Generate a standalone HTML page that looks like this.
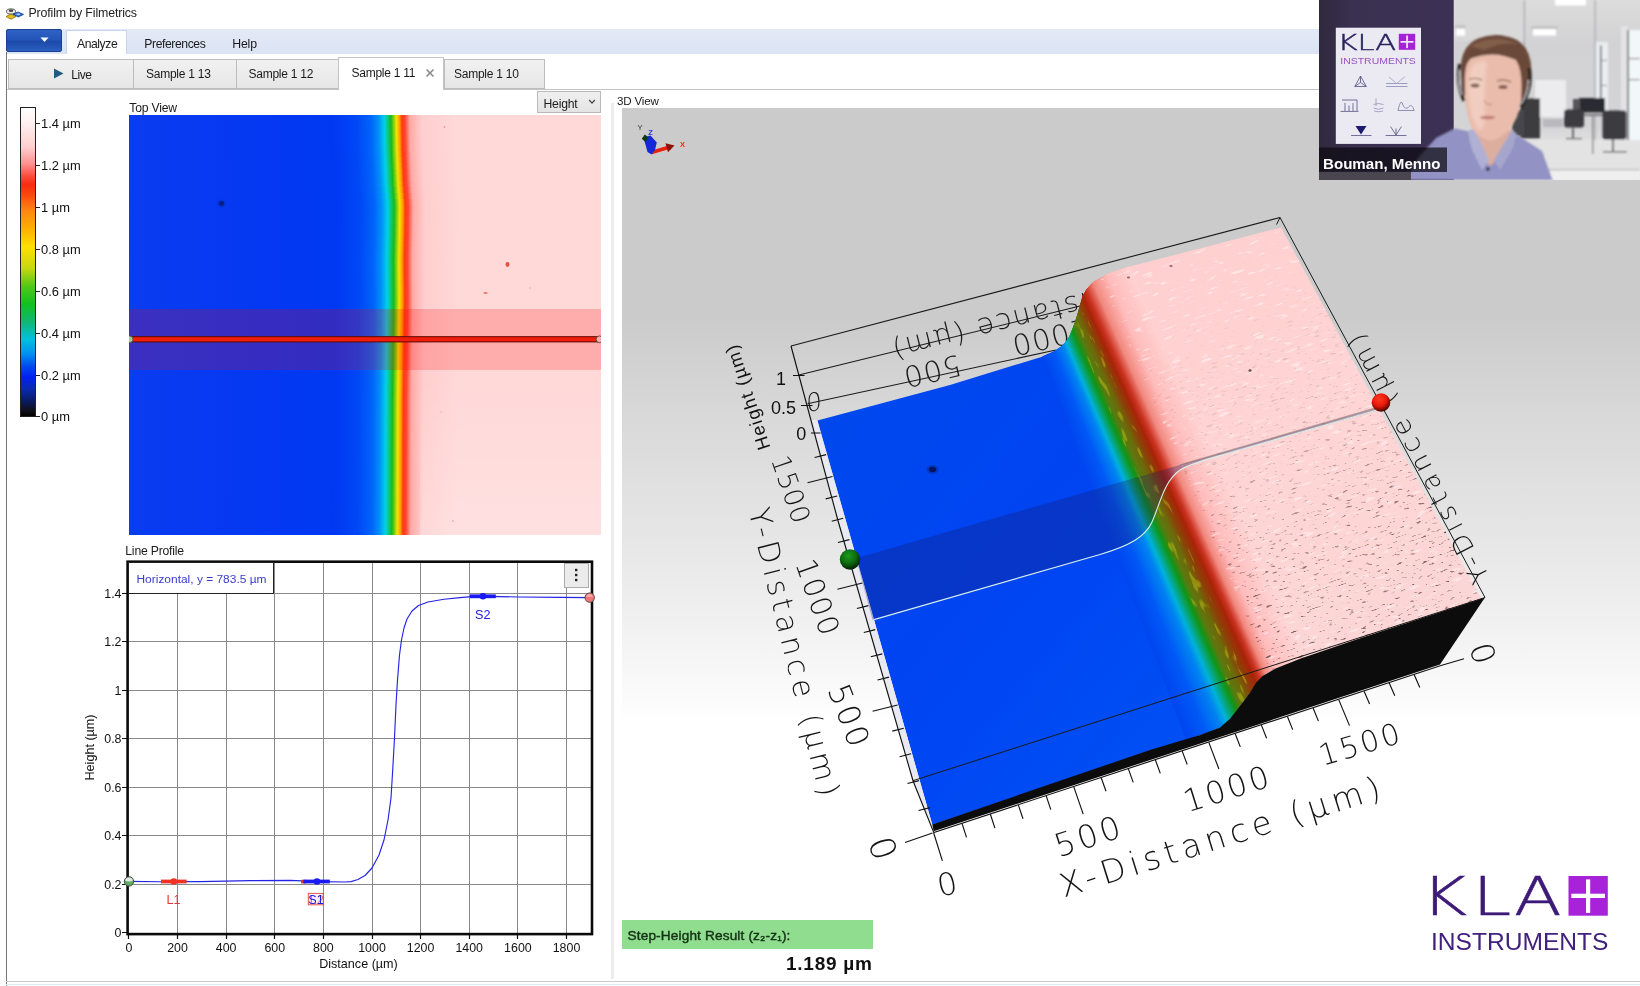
<!DOCTYPE html>
<html lang="en">
<head>
<meta charset="utf-8">
<title>Profilm by Filmetrics</title>
<style>
*{box-sizing:border-box;margin:0;padding:0}
html,body{width:1640px;height:986px;overflow:hidden;background:#fff}
body{opacity:.9999;position:relative;font-family:"Liberation Sans",sans-serif;font-size:12px;color:#1a1a1a}
.abs{position:absolute}
.t{position:absolute;white-space:nowrap;line-height:1}
#titlebar{left:0;top:0;width:1640px;height:29px;background:#fff}
#ribbon{left:6px;top:29px;width:1634px;height:25px;background:linear-gradient(#e3e9f6,#dbe4f4)}
#appbtn{left:6px;top:29px;width:56px;height:23px;background:linear-gradient(#2f62c4,#2456b8 45%,#1c4aa8 55%,#2a5ec0);border:1px solid #1c3f94;border-radius:2px}
#tabAnalyze{left:66px;top:30px;width:61px;height:24px;background:#fff;border:1px solid #c9d4ea;border-bottom:none}
.doc{position:absolute;top:59px;height:30px;background:linear-gradient(#f1f1f1,#e6e6e6);border:1px solid #bdbdbd;border-right:none}
#tabrowline{left:7px;top:89px;width:1312px;height:1px;background:#c4c4c4}
#leftline{left:6px;top:52px;width:1px;height:934px;background:#777}
#bottomline{left:6px;top:981px;width:1634px;height:1px;background:#c9c9c9}
#bottomstrip{left:6px;top:984px;width:1634px;height:1px;background:#d6f0f6}
#splitter{left:611px;top:103px;width:3px;height:876px;background:#ececec}
#heightdd{left:537px;top:91px;width:64px;height:22px;background:linear-gradient(#f0f0f0,#e4e4e4);border:1px solid #b9b9b9}
</style>
</head>
<body>
<!-- ===== window chrome ===== -->
<div id="titlebar" class="abs"></div>
<svg class="abs" style="left:5px;top:6px" width="20" height="16" viewBox="0 0 20 16">
  <ellipse cx="6" cy="5.5" rx="4.5" ry="2.6" fill="#e8e8e8" stroke="#555" stroke-width="1"/>
  <ellipse cx="6" cy="4.8" rx="2.2" ry="1.2" fill="#444"/>
  <path d="M1 10.5 L6 8.2 L11 10.5 L6 13.2 Z" fill="#e6c020" stroke="#8a6a00" stroke-width=".8"/>
  <path d="M8 8.2 L13 6 L18.5 8.4 L13.2 11 Z" fill="#2c6fd8" stroke="#123a80" stroke-width=".8"/>
  <ellipse cx="13.3" cy="8.2" rx="2" ry="1" fill="#9cc4ff"/>
</svg>
<div class="t" id="ttl" style="left:28.5px;top:7px;font-size:12.4px;letter-spacing:-.15px;color:#222">Profilm by Filmetrics</div>

<div id="ribbon" class="abs"></div>
<div id="appbtn" class="abs"></div>
<svg class="abs" style="left:40px;top:37px" width="10" height="6"><path d="M0.5 0.5 L8.5 0.5 L4.5 5 Z" fill="#fff"/></svg>
<div id="tabAnalyze" class="abs"></div>
<div class="t" id="mAnalyze" style="left:77px;top:37.5px;font-size:12.2px;letter-spacing:-.45px">Analyze</div>
<div class="t" id="mPref" style="left:144.3px;top:37.5px;font-size:12.2px;letter-spacing:-.42px">Preferences</div>
<div class="t" id="mHelp" style="left:232.3px;top:37.5px;font-size:12.3px;letter-spacing:-.2px">Help</div>

<div id="tabrowline" class="abs"></div>
<div class="doc" style="left:8px;width:126px"></div>
<div class="doc" style="left:133px;width:104px"></div>
<div class="doc" style="left:236px;width:103px"></div>
<div class="doc" style="left:444px;width:101px;border-right:1px solid #bdbdbd"></div>
<div class="abs" style="left:338px;top:57px;width:106px;height:33px;background:#fff;border:1px solid #c4c4c4;border-bottom:none"></div>
<svg class="abs" style="left:53px;top:68px" width="12" height="12"><path d="M1 0.5 L10.5 5.5 L1 10.5 Z" fill="#1f5c80"/></svg>
<div class="t" id="dLive" style="left:71.3px;top:68.5px;font-size:12px;letter-spacing:-.5px">Live</div>
<div class="t" id="d13" style="left:146px;top:68px;font-size:12px;letter-spacing:-.25px">Sample 1 13</div>
<div class="t" id="d12" style="left:248.5px;top:68px;font-size:12px;letter-spacing:-.25px">Sample 1 12</div>
<div class="t" id="d11" style="left:351.5px;top:67px;font-size:12px;letter-spacing:-.25px">Sample 1 11</div>
<svg class="abs" style="left:425px;top:68px" width="10" height="10"><path d="M1.5 1.5 L8.5 8.5 M8.5 1.5 L1.5 8.5" stroke="#8c8c8c" stroke-width="1.7" fill="none"/></svg>
<div class="t" id="d10" style="left:454px;top:68px;font-size:12px;letter-spacing:-.25px">Sample 1 10</div>

<div id="leftline" class="abs"></div>
<div id="splitter" class="abs"></div>
<div id="bottomline" class="abs"></div>
<div id="bottomstrip" class="abs"></div>

<!-- ===== colour bar ===== -->
<svg class="abs" style="left:0;top:100px" width="128" height="330" viewBox="0 100 128 330" font-family="Liberation Sans, sans-serif" font-size="12.9" fill="#111">
  <defs>
    <linearGradient id="cbar" x1="0" y1="0" x2="0" y2="1">
      <stop offset="0" stop-color="#ffffff"/>
      <stop offset=".043" stop-color="#fff2f2"/>
      <stop offset=".127" stop-color="#ffd0d0"/>
      <stop offset=".183" stop-color="#ff9090"/>
      <stop offset=".22" stop-color="#fb5040"/>
      <stop offset=".25" stop-color="#f82a0e"/>
      <stop offset=".285" stop-color="#fb4a10"/>
      <stop offset=".31" stop-color="#ff6a10"/>
      <stop offset=".34" stop-color="#ff8c10"/>
      <stop offset=".395" stop-color="#ffb000"/>
      <stop offset=".45" stop-color="#ffe000"/>
      <stop offset=".519" stop-color="#c8d810"/>
      <stop offset=".579" stop-color="#50c818"/>
      <stop offset=".638" stop-color="#10c020"/>
      <stop offset=".697" stop-color="#10b878"/>
      <stop offset=".75" stop-color="#00c0e0"/>
      <stop offset=".798" stop-color="#0090f0"/>
      <stop offset=".839" stop-color="#0048f0"/>
      <stop offset=".874" stop-color="#0020f0"/>
      <stop offset=".91" stop-color="#0a2ab0"/>
      <stop offset=".951" stop-color="#0a1a60"/>
      <stop offset=".981" stop-color="#101018"/>
      <stop offset="1" stop-color="#000000"/>
    </linearGradient>
  </defs>
  <rect x="20.5" y="107.5" width="15" height="309" fill="url(#cbar)" stroke="#222" stroke-width="1"/>
  <g stroke="#222" stroke-width="1">
    <path d="M35 123.5h5M35 165.5h5M35 207.5h5M35 249.5h5M35 291.5h5M35 333.5h5M35 375.5h5M35 416.5h5"/>
  </g>
  <text x="41" y="128">1.4 µm</text>
  <text x="41" y="170">1.2 µm</text>
  <text x="41" y="212">1 µm</text>
  <text x="41" y="254">0.8 µm</text>
  <text x="41" y="296">0.6 µm</text>
  <text x="41" y="338">0.4 µm</text>
  <text x="41" y="380">0.2 µm</text>
  <text x="41" y="421">0 µm</text>
</svg>

<!-- ===== top view ===== -->
<div class="t" id="lblTop" style="left:129.3px;top:101.5px;font-size:12.2px;letter-spacing:-.2px">Top View</div>
<div id="heightdd" class="abs"></div>
<div class="t" id="lblHeight" style="left:543.5px;top:97.5px;font-size:12.2px;letter-spacing:-.2px">Height</div>
<svg class="abs" style="left:588px;top:99px" width="8" height="6"><path d="M1.2 1 L4 4.2 L6.8 1" stroke="#444" stroke-width="1.2" fill="none"/></svg>
<svg class="abs" style="left:129px;top:115px" width="472" height="420" viewBox="129 115 472 420">
  <defs>
    <linearGradient id="tv" gradientUnits="userSpaceOnUse" x1="128" y1="0" x2="601" y2="0">
      <stop offset="0" stop-color="#0a3cf0"/>
      <stop offset=".30" stop-color="#0438f2"/>
      <stop offset=".44" stop-color="#0038f2"/>
      <stop offset=".49" stop-color="#0048f6"/>
      <stop offset=".52" stop-color="#0064fa"/>
      <stop offset=".536" stop-color="#0090f8"/>
      <stop offset=".5484" stop-color="#00d0e8"/>
      <stop offset=".556" stop-color="#10c878"/>
      <stop offset=".5624" stop-color="#14bc1c"/>
      <stop offset=".5687" stop-color="#8cd010"/>
      <stop offset=".5738" stop-color="#f4e400"/>
      <stop offset=".5806" stop-color="#ff9c00"/>
      <stop offset=".5856" stop-color="#ff3c10"/>
      <stop offset=".592" stop-color="#ff4432"/>
      <stop offset=".6025" stop-color="#ffaaa6"/>
      <stop offset=".628" stop-color="#ffcece"/>
      <stop offset=".70" stop-color="#ffd8d8"/>
      <stop offset="1" stop-color="#ffd8d8"/>
    </linearGradient>
    <linearGradient id="tvl" x1="0" y1="0" x2="0" y2="1"><stop offset="0" stop-color="#fff" stop-opacity="0"/><stop offset="1" stop-color="#fff" stop-opacity=".22"/></linearGradient>
    <clipPath id="tvc"><rect x="129" y="115" width="472" height="420"/></clipPath>
  </defs>
  <g clip-path="url(#tvc)">
    <rect x="120" y="115" width="490" height="7" fill="url(#tv)" transform="translate(-3.15 0)"/>
    <rect x="120" y="121" width="490" height="7" fill="url(#tv)" transform="translate(-3.05 0)"/>
    <rect x="120" y="127" width="490" height="7" fill="url(#tv)" transform="translate(-2.94 0)"/>
    <rect x="120" y="133" width="490" height="7" fill="url(#tv)" transform="translate(-2.84 0)"/>
    <rect x="120" y="139" width="490" height="7" fill="url(#tv)" transform="translate(-2.74 0)"/>
    <rect x="120" y="145" width="490" height="7" fill="url(#tv)" transform="translate(-2.63 0)"/>
    <rect x="120" y="151" width="490" height="7" fill="url(#tv)" transform="translate(-2.44 0)"/>
    <rect x="120" y="157" width="490" height="7" fill="url(#tv)" transform="translate(-2.20 0)"/>
    <rect x="120" y="163" width="490" height="7" fill="url(#tv)" transform="translate(-1.96 0)"/>
    <rect x="120" y="169" width="490" height="7" fill="url(#tv)" transform="translate(-1.72 0)"/>
    <rect x="120" y="175" width="490" height="7" fill="url(#tv)" transform="translate(-1.48 0)"/>
    <rect x="120" y="181" width="490" height="7" fill="url(#tv)" transform="translate(-1.24 0)"/>
    <rect x="120" y="187" width="490" height="7" fill="url(#tv)" transform="translate(-0.82 0)"/>
    <rect x="120" y="193" width="490" height="7" fill="url(#tv)" transform="translate(-0.38 0)"/>
    <rect x="120" y="199" width="490" height="7" fill="url(#tv)" transform="translate(0.07 0)"/>
    <rect x="120" y="205" width="490" height="7" fill="url(#tv)" transform="translate(0.26 0)"/>
    <rect x="120" y="211" width="490" height="7" fill="url(#tv)" transform="translate(0.19 0)"/>
    <rect x="120" y="217" width="490" height="7" fill="url(#tv)" transform="translate(0.12 0)"/>
    <rect x="120" y="223" width="490" height="7" fill="url(#tv)" transform="translate(0.05 0)"/>
    <rect x="120" y="229" width="490" height="7" fill="url(#tv)" transform="translate(-0.04 0)"/>
    <rect x="120" y="235" width="490" height="7" fill="url(#tv)" transform="translate(-0.16 0)"/>
    <rect x="120" y="241" width="490" height="7" fill="url(#tv)" transform="translate(-0.28 0)"/>
    <rect x="120" y="247" width="490" height="7" fill="url(#tv)" transform="translate(-0.40 0)"/>
    <rect x="120" y="253" width="490" height="7" fill="url(#tv)" transform="translate(-0.52 0)"/>
    <rect x="120" y="259" width="490" height="7" fill="url(#tv)" transform="translate(-0.58 0)"/>
    <rect x="120" y="265" width="490" height="7" fill="url(#tv)" transform="translate(-0.52 0)"/>
    <rect x="120" y="271" width="490" height="7" fill="url(#tv)" transform="translate(-0.46 0)"/>
    <rect x="120" y="277" width="490" height="7" fill="url(#tv)" transform="translate(-0.40 0)"/>
    <rect x="120" y="283" width="490" height="7" fill="url(#tv)" transform="translate(-0.34 0)"/>
    <rect x="120" y="289" width="490" height="7" fill="url(#tv)" transform="translate(-0.28 0)"/>
    <rect x="120" y="295" width="490" height="7" fill="url(#tv)" transform="translate(-0.22 0)"/>
    <rect x="120" y="301" width="490" height="7" fill="url(#tv)" transform="translate(-0.26 0)"/>
    <rect x="120" y="307" width="490" height="7" fill="url(#tv)" transform="translate(-0.35 0)"/>
    <rect x="120" y="313" width="490" height="7" fill="url(#tv)" transform="translate(-0.44 0)"/>
    <rect x="120" y="319" width="490" height="7" fill="url(#tv)" transform="translate(-0.53 0)"/>
    <rect x="120" y="325" width="490" height="7" fill="url(#tv)" transform="translate(-0.62 0)"/>
    <rect x="120" y="331" width="490" height="7" fill="url(#tv)" transform="translate(-0.71 0)"/>
    <rect x="120" y="337" width="490" height="7" fill="url(#tv)" transform="translate(-0.80 0)"/>
    <rect x="120" y="343" width="490" height="7" fill="url(#tv)" transform="translate(-0.88 0)"/>
    <rect x="120" y="349" width="490" height="7" fill="url(#tv)" transform="translate(-0.96 0)"/>
    <rect x="120" y="355" width="490" height="7" fill="url(#tv)" transform="translate(-1.04 0)"/>
    <rect x="120" y="361" width="490" height="7" fill="url(#tv)" transform="translate(-1.12 0)"/>
    <rect x="120" y="367" width="490" height="7" fill="url(#tv)" transform="translate(-1.20 0)"/>
    <rect x="120" y="373" width="490" height="7" fill="url(#tv)" transform="translate(-1.28 0)"/>
    <rect x="120" y="379" width="490" height="7" fill="url(#tv)" transform="translate(-1.36 0)"/>
    <rect x="120" y="385" width="490" height="7" fill="url(#tv)" transform="translate(-1.44 0)"/>
    <rect x="120" y="391" width="490" height="7" fill="url(#tv)" transform="translate(-1.52 0)"/>
    <rect x="120" y="397" width="490" height="7" fill="url(#tv)" transform="translate(-1.60 0)"/>
    <rect x="120" y="403" width="490" height="7" fill="url(#tv)" transform="translate(-1.63 0)"/>
    <rect x="120" y="409" width="490" height="7" fill="url(#tv)" transform="translate(-1.65 0)"/>
    <rect x="120" y="415" width="490" height="7" fill="url(#tv)" transform="translate(-1.68 0)"/>
    <rect x="120" y="421" width="490" height="7" fill="url(#tv)" transform="translate(-1.70 0)"/>
    <rect x="120" y="427" width="490" height="7" fill="url(#tv)" transform="translate(-1.73 0)"/>
    <rect x="120" y="433" width="490" height="7" fill="url(#tv)" transform="translate(-1.75 0)"/>
    <rect x="120" y="439" width="490" height="7" fill="url(#tv)" transform="translate(-1.78 0)"/>
    <rect x="120" y="445" width="490" height="7" fill="url(#tv)" transform="translate(-1.81 0)"/>
    <rect x="120" y="451" width="490" height="7" fill="url(#tv)" transform="translate(-1.83 0)"/>
    <rect x="120" y="457" width="490" height="7" fill="url(#tv)" transform="translate(-1.86 0)"/>
    <rect x="120" y="463" width="490" height="7" fill="url(#tv)" transform="translate(-1.88 0)"/>
    <rect x="120" y="469" width="490" height="7" fill="url(#tv)" transform="translate(-1.91 0)"/>
    <rect x="120" y="475" width="490" height="7" fill="url(#tv)" transform="translate(-1.94 0)"/>
    <rect x="120" y="481" width="490" height="7" fill="url(#tv)" transform="translate(-1.96 0)"/>
    <rect x="120" y="487" width="490" height="7" fill="url(#tv)" transform="translate(-1.99 0)"/>
    <rect x="120" y="493" width="490" height="7" fill="url(#tv)" transform="translate(-2.02 0)"/>
    <rect x="120" y="499" width="490" height="7" fill="url(#tv)" transform="translate(-2.05 0)"/>
    <rect x="120" y="505" width="490" height="7" fill="url(#tv)" transform="translate(-2.08 0)"/>
    <rect x="120" y="511" width="490" height="7" fill="url(#tv)" transform="translate(-2.10 0)"/>
    <rect x="120" y="517" width="490" height="7" fill="url(#tv)" transform="translate(-2.13 0)"/>
    <rect x="120" y="523" width="490" height="7" fill="url(#tv)" transform="translate(-2.16 0)"/>
    <rect x="120" y="529" width="490" height="7" fill="url(#tv)" transform="translate(-2.19 0)"/>
    <!-- specks -->
    <ellipse cx="221.5" cy="203.5" rx="2.6" ry="2.4" fill="#0a1a70"/>
    <ellipse cx="221.5" cy="203.5" rx="4.5" ry="4" fill="#0a2ab0" opacity=".35"/>
    <ellipse cx="507.5" cy="264.5" rx="1.9" ry="2.4" fill="#e8503c"/>
    <ellipse cx="485.5" cy="293" rx="2.2" ry="1" fill="#ee7868"/>
    <circle cx="444.5" cy="127" r=".9" fill="#ee9a90"/>
    <circle cx="530" cy="288" r=".7" fill="#ee9a90"/>
    <circle cx="441" cy="412" r=".7" fill="#f0a8a0"/>
    <circle cx="453" cy="521" r="1" fill="#e8a098"/>
    <rect x="420" y="380" width="181" height="155" fill="url(#tvl)"/>
    <!-- profile band -->
    <rect x="128" y="309" width="473" height="61" fill="#ff0000" opacity=".2"/>
    <!-- profile line -->
    <rect x="130" y="336.6" width="469" height="5.4" fill="#f01c0c"/>
    <rect x="130" y="336.2" width="469" height="1" fill="#5a0a04"/>
    <rect x="130" y="341.4" width="469" height="1" fill="#5a0a04"/>
    <circle cx="129.5" cy="339.3" r="3.4" fill="#9ad09a" stroke="#555" stroke-width=".9"/>
    <circle cx="599.5" cy="339.3" r="3.4" fill="#f4b0a8" stroke="#6a3a34" stroke-width=".9"/>
  </g>
</svg>

<!-- ===== line profile ===== -->
<div class="t" id="lblLine" style="left:125.3px;top:545px;font-size:12.2px;letter-spacing:-.2px">Line Profile</div>
<svg class="abs" style="left:70px;top:555px" width="540" height="425" viewBox="70 555 540 425" font-family="Liberation Sans, sans-serif" font-size="12.4" fill="#111">
  <rect x="128" y="562" width="464" height="372" fill="#fff"/>
  <path d="M177.5 562V933M226.5 562V933M274.5 562V933M323.5 562V933M372.5 562V933M420.5 562V933M469.5 562V933M517.5 562V933M566.5 562V933M129 884.5H591M129 835.5H591M129 787.5H591M129 738.5H591M129 690.5H591M129 641.5H591M129 593.5H591" stroke="#8a8a8a" stroke-width="1" fill="none"/>
  <path d="M122 932.5H128M122 884.5H128M122 835.5H128M122 787.5H128M122 738.5H128M122 690.5H128M122 641.5H128M122 593.5H128M128.5 934V939M177.5 934V939M226.5 934V939M274.5 934V939M323.5 934V939M372.5 934V939M420.5 934V939M469.5 934V939M517.5 934V939M566.5 934V939" stroke="#111" stroke-width="1.2" fill="none"/>
  <rect x="127.6" y="561.7" width="464.4" height="372.4" fill="none" stroke="#0a0a0a" stroke-width="2.6"/>
  <text x="121.5" y="937.4" text-anchor="end">0</text><text x="121.5" y="888.9" text-anchor="end">0.2</text><text x="121.5" y="840.4" text-anchor="end">0.4</text><text x="121.5" y="791.9" text-anchor="end">0.6</text><text x="121.5" y="743.4" text-anchor="end">0.8</text><text x="121.5" y="694.9" text-anchor="end">1</text><text x="121.5" y="646.4" text-anchor="end">1.2</text><text x="121.5" y="597.9" text-anchor="end">1.4</text>
  <text x="128.9" y="951.9" text-anchor="middle">0</text><text x="177.5" y="951.9" text-anchor="middle">200</text><text x="226.1" y="951.9" text-anchor="middle">400</text><text x="274.8" y="951.9" text-anchor="middle">600</text><text x="323.4" y="951.9" text-anchor="middle">800</text><text x="372.0" y="951.9" text-anchor="middle">1000</text><text x="420.6" y="951.9" text-anchor="middle">1200</text><text x="469.2" y="951.9" text-anchor="middle">1400</text><text x="517.9" y="951.9" text-anchor="middle">1600</text><text x="566.5" y="951.9" text-anchor="middle">1800</text>
  <text x="358.5" y="968" text-anchor="middle" font-size="12.6">Distance (µm)</text>
  <text transform="translate(93.5 747.5) rotate(-90)" text-anchor="middle" font-size="12.6">Height (µm)</text>
  <!-- legend -->
  <rect x="128.5" y="562.5" width="145" height="31" fill="#fff" stroke="#222" stroke-width="1"/>
  <text x="136.5" y="583.3" font-size="11.7" fill="#3a3ad0" textLength="130" lengthAdjust="spacingAndGlyphs">Horizontal, y = 783.5 µm</text>
  <!-- menu button -->
  <rect x="564.5" y="563.5" width="24" height="24" fill="#ebebeb" stroke="#ababab" stroke-width="1"/>
  <g fill="#222"><rect x="575" y="568.8" width="2.4" height="2.4"/><rect x="575" y="573.8" width="2.4" height="2.4"/><rect x="575" y="578.8" width="2.4" height="2.4"/></g>
  <!-- curve -->
  <path d="M129.0 881.4 L160.0 881.8 L200.0 881.6 L250.0 880.6 L290.0 880.4 L320.0 881.6 L345.0 882.0 L351.0 881.6 L358.0 879.5 L365.0 875.5 L372.0 868.0 L379.0 855.0 L384.0 840.0 L388.0 820.0 L391.0 798.0 L393.0 765.0 L394.5 738.0 L396.0 705.0 L397.5 680.0 L399.5 655.0 L401.5 640.0 L404.0 628.0 L407.0 619.0 L412.0 611.0 L418.5 605.5 L428.0 602.0 L444.0 599.3 L460.0 597.6 L472.0 596.6 L490.0 596.4 L520.0 597.0 L560.0 597.4 L590.0 597.6" stroke="#2424e6" stroke-width="1.15" fill="none" stroke-linejoin="round"/>
  <!-- markers -->
  <rect x="161" y="879.6" width="25.6" height="3.8" fill="#f03222"/>
  <circle cx="173.8" cy="881.5" r="3.3" fill="#f03222"/>
  <text x="166.5" y="904" fill="#e23a32" font-size="12.6">L1</text>
  <rect x="301" y="879.8" width="5" height="3.6" fill="#f03222"/>
  <rect x="303.3" y="879.6" width="26.5" height="3.8" fill="#1a1af2"/>
  <circle cx="317" cy="881.5" r="3.3" fill="#1a1af2"/>
  <rect x="308.3" y="893.4" width="15" height="11.4" fill="#fff0f0" stroke="#e23a32" stroke-width="1" opacity=".85"/>
  <text x="309.8" y="904" fill="#e23a32" font-size="12.6" opacity=".7">L2</text>
  <text x="308.3" y="904" fill="#2020e0" font-size="12.6">S1</text>
  <rect x="470" y="594.4" width="25.8" height="3.8" fill="#1a1af2"/>
  <circle cx="483" cy="596.3" r="3.3" fill="#1a1af2"/>
  <text x="475" y="618.7" fill="#2020e0" font-size="12.6">S2</text>
  <!-- handles -->
  <circle cx="129" cy="881.4" r="4.7" fill="#5fae5f" stroke="#4a4a4a" stroke-width="1"/>
  <path d="M125 880.4 A4.2 4.2 0 0 1 133 880.4 Q129 882.5 125 880.4Z" fill="#e6e6e6"/>
  <circle cx="589.7" cy="597.6" r="4.7" fill="#f27474" stroke="#5a4a4a" stroke-width="1"/>
  <path d="M586 596.4 A4 4 0 0 1 593.4 596.4 Q589.7 597.6 586 596.4Z" fill="#f8a6a6"/>
</svg>

<!-- ===== 3D view ===== -->
<div class="t" id="lbl3d" style="left:617px;top:95px;font-size:11.6px;letter-spacing:-.2px">3D View</div>
<!--V3S--><svg class="abs" style="left:622px;top:108px" width="1018" height="812" viewBox="622 108 1018 812">
  <defs>
    <linearGradient id="bg3d" gradientUnits="userSpaceOnUse" x1="0" y1="108" x2="0" y2="920">
      <stop offset="0" stop-color="#cbcbcb"/>
      <stop offset=".255" stop-color="#cbcbcb"/>
      <stop offset=".384" stop-color="#d9d9d9"/>
      <stop offset=".507" stop-color="#e4e4e4"/>
      <stop offset=".63" stop-color="#f0f0f0"/>
      <stop offset=".761" stop-color="#ffffff"/>
      <stop offset="1" stop-color="#ffffff"/>
    </linearGradient>
    <linearGradient id="blueg" gradientUnits="userSpaceOnUse" x1="820" y1="420" x2="1200" y2="740">
      <stop offset="0" stop-color="#0048ee"/>
      <stop offset=".5" stop-color="#0044f2"/>
      <stop offset="1" stop-color="#0050f4"/>
    </linearGradient>
    <linearGradient id="pinkg" gradientUnits="userSpaceOnUse" x1="1150" y1="260" x2="1420" y2="640">
      <stop offset="0" stop-color="#ffcfcf"/>
      <stop offset=".45" stop-color="#ffd4d4"/>
      <stop offset="1" stop-color="#fbd6d6"/>
    </linearGradient>
    <radialGradient id="sphG" cx=".42" cy=".32" r=".7">
      <stop offset="0" stop-color="#1e9a1e"/><stop offset=".55" stop-color="#0c6a10"/><stop offset="1" stop-color="#021a04"/>
    </radialGradient>
    <radialGradient id="sphR" cx=".42" cy=".32" r=".7">
      <stop offset="0" stop-color="#ff3a20"/><stop offset=".55" stop-color="#e41808"/><stop offset="1" stop-color="#3a0400"/>
    </radialGradient>
    <filter id="specks" x="0" y="0" width="100%" height="100%" color-interpolation-filters="sRGB">
      <feTurbulence type="fractalNoise" baseFrequency=".13 .5" numOctaves="2" seed="7" result="n"/>
      <feColorMatrix in="n" type="matrix" values="0 0 0 0 .45  0 0 0 0 .32  0 0 0 0 .32  -7 0 0 0 2.65"/>
    </filter>
    <filter id="hilite" x="0" y="0" width="100%" height="100%" color-interpolation-filters="sRGB">
      <feTurbulence type="fractalNoise" baseFrequency=".07 .35" numOctaves="2" seed="23" result="n"/>
      <feColorMatrix in="n" type="matrix" values="0 0 0 0 1  0 0 0 0 .96  0 0 0 0 .96  0 8 0 0 -5"/>
    </filter>
    <linearGradient id="fadeF" gradientUnits="userSpaceOnUse" x1="1200" y1="300" x2="1380" y2="660">
      <stop offset="0" stop-color="#fff" stop-opacity="0"/>
      <stop offset=".35" stop-color="#fff" stop-opacity=".25"/>
      <stop offset=".7" stop-color="#fff" stop-opacity=".8"/>
      <stop offset="1" stop-color="#fff" stop-opacity="1"/>
    </linearGradient>
    <mask id="mfade"><rect x="1080" y="220" width="420" height="460" fill="url(#fadeF)"/></mask>
    <filter id="yspk" x="0" y="0" width="100%" height="100%" color-interpolation-filters="sRGB">
      <feTurbulence type="fractalNoise" baseFrequency=".05 .22" numOctaves="2" seed="11" result="n"/>
      <feColorMatrix in="n" type="matrix" values="0 0 0 0 .74  0 0 0 0 .74  0 0 0 0 .08  0 9 0 0 -5.3"/>
    </filter>
    <clipPath id="oliveclip"><polygon points="1073.5,326 1080.5,303 1251,691 1238,708.500"/></clipPath>
    <clipPath id="pinkclip"><polygon points="1100,277 1281,227.5 1482,599.5 1270,671"/></clipPath>
  </defs>
  <rect x="622" y="108" width="1018" height="812" fill="url(#bg3d)"/>

  <!-- back lines + upside-down back labels -->
  <g stroke="#1a1a1a" stroke-width="1.1" fill="none">
    <path d="M791 346L1280 217.5M798.8 375L1082 305.5M807.5 403.8L1056 350"/>
  </g>
  <g font-family="DejaVu Sans Light, DejaVu Sans, Liberation Sans, sans-serif" font-weight="200" fill="#1a1a1a">
    <text transform="translate(814 401) rotate(166) skewX(-10)" font-size="25" text-anchor="middle" dominant-baseline="central">0</text>
    <text transform="translate(932 371) rotate(166.5)" font-size="29" text-anchor="middle" dominant-baseline="central" letter-spacing="1.2">500</text>
    <text transform="translate(1050 337) rotate(166.5)" font-size="29" text-anchor="middle" dominant-baseline="central" letter-spacing="1.2">1000</text>
    <text transform="translate(889 341.5) rotate(166)" font-size="28" text-anchor="end" letter-spacing="2.2">X-Distance (µm)</text>
  </g>

  <!-- surface -->
  <polygon points="817.5,420.5 950,385 1043,356.4 1187,739.4 932.3,824.8" fill="url(#blueg)"/>
  <polygon points="1128,267 1281,227.5 1482,599.5 1298,659.5" fill="url(#pinkg)"/>
    <polygon points="1042.0,356.6 1043.5,356.0 1045.0,355.3 1046.5,354.7 1193.1,737.3 1190.8,738.1 1188.4,738.9 1186.0,739.7" fill="#0047f0"/>
    <polygon points="1043.5,356.0 1045.0,355.3 1046.5,354.7 1048.0,354.1 1195.5,736.5 1193.1,737.3 1190.8,738.1 1188.4,738.9" fill="#0049f1"/>
    <polygon points="1045.0,355.3 1046.5,354.7 1048.0,354.1 1049.5,353.4 1197.9,735.6 1195.5,736.5 1193.1,737.3 1190.8,738.1" fill="#004cf2"/>
    <polygon points="1046.5,354.7 1048.0,354.1 1049.5,353.4 1051.0,352.8 1200.2,734.8 1197.9,735.6 1195.5,736.5 1193.1,737.3" fill="#004ef3"/>
    <polygon points="1048.0,354.1 1049.5,353.4 1051.0,352.8 1052.5,352.1 1202.6,734.0 1200.2,734.8 1197.9,735.6 1195.5,736.5" fill="#0050f3"/>
    <polygon points="1049.5,353.4 1051.0,352.8 1052.5,352.1 1054.0,351.5 1205.0,733.2 1202.6,734.0 1200.2,734.8 1197.9,735.6" fill="#0052f4"/>
    <polygon points="1051.0,352.8 1052.5,352.1 1054.0,351.5 1055.1,350.8 1207.0,732.4 1205.0,733.2 1202.6,734.0 1200.2,734.8" fill="#0055f5"/>
    <polygon points="1052.5,352.1 1054.0,351.5 1055.1,350.8 1056.1,350.0 1209.0,731.7 1207.0,732.4 1205.0,733.2 1202.6,734.0" fill="#0057f6"/>
    <polygon points="1054.0,351.5 1055.1,350.8 1056.1,350.0 1057.2,349.2 1211.0,730.9 1209.0,731.7 1207.0,732.4 1205.0,733.2" fill="#005bf6"/>
    <polygon points="1055.1,350.8 1056.1,350.0 1057.2,349.2 1058.2,348.5 1213.0,730.1 1211.0,730.9 1209.0,731.7 1207.0,732.4" fill="#0060f5"/>
    <polygon points="1056.1,350.0 1057.2,349.2 1058.2,348.5 1059.3,347.8 1215.0,729.3 1213.0,730.1 1211.0,730.9 1209.0,731.7" fill="#0066f5"/>
    <polygon points="1057.2,349.2 1058.2,348.5 1059.3,347.8 1060.4,347.0 1217.0,728.5 1215.0,729.3 1213.0,730.1 1211.0,730.9" fill="#006bf4"/>
    <polygon points="1058.2,348.5 1059.3,347.8 1060.4,347.0 1061.4,346.2 1219.0,727.8 1217.0,728.5 1215.0,729.3 1213.0,730.1" fill="#0071f4"/>
    <polygon points="1059.3,347.8 1060.4,347.0 1061.4,346.2 1062.5,345.5 1221.0,727.0 1219.0,727.8 1217.0,728.5 1215.0,729.3" fill="#0076f3"/>
    <polygon points="1060.4,347.0 1061.4,346.2 1062.5,345.5 1062.9,345.0 1221.8,726.4 1221.0,727.0 1219.0,727.8 1217.0,728.5" fill="#007cf3"/>
    <polygon points="1061.4,346.2 1062.5,345.5 1062.9,345.0 1063.4,344.5 1222.5,725.8 1221.8,726.4 1221.0,727.0 1219.0,727.8" fill="#0081f2"/>
    <polygon points="1062.5,345.5 1062.9,345.0 1063.4,344.5 1063.8,344.0 1223.2,725.1 1222.5,725.8 1221.8,726.4 1221.0,727.0" fill="#0087f1"/>
    <polygon points="1062.9,345.0 1063.4,344.5 1063.8,344.0 1064.2,343.5 1224.0,724.5 1223.2,725.1 1222.5,725.8 1221.8,726.4" fill="#008dee"/>
    <polygon points="1063.4,344.5 1063.8,344.0 1064.2,343.5 1064.7,343.0 1224.8,723.9 1224.0,724.5 1223.2,725.1 1222.5,725.8" fill="#0092eb"/>
    <polygon points="1063.8,344.0 1064.2,343.5 1064.7,343.0 1065.1,342.5 1225.5,723.2 1224.8,723.9 1224.0,724.5 1223.2,725.1" fill="#0098e8"/>
    <polygon points="1064.2,343.5 1064.7,343.0 1065.1,342.5 1065.6,342.0 1226.2,722.6 1225.5,723.2 1224.8,723.9 1224.0,724.5" fill="#009ee6"/>
    <polygon points="1064.7,343.0 1065.1,342.5 1065.6,342.0 1066.0,341.5 1227.0,722.0 1226.2,722.6 1225.5,723.2 1224.8,723.9" fill="#00a4e3"/>
    <polygon points="1065.1,342.5 1065.6,342.0 1066.0,341.5 1066.4,340.9 1227.6,721.4 1227.0,722.0 1226.2,722.6 1225.5,723.2" fill="#00a9e0"/>
    <polygon points="1065.6,342.0 1066.0,341.5 1066.4,340.9 1066.8,340.4 1228.1,720.8 1227.6,721.4 1227.0,722.0 1226.2,722.6" fill="#00afdd"/>
    <polygon points="1066.0,341.5 1066.4,340.9 1066.8,340.4 1067.1,339.8 1228.7,720.1 1228.1,720.8 1227.6,721.4 1227.0,722.0" fill="#00b1d6"/>
    <polygon points="1066.4,340.9 1066.8,340.4 1067.1,339.8 1067.5,339.2 1229.2,719.5 1228.7,720.1 1228.1,720.8 1227.6,721.4" fill="#02b0ca"/>
    <polygon points="1066.8,340.4 1067.1,339.8 1067.5,339.2 1067.9,338.7 1229.8,718.9 1229.2,719.5 1228.7,720.1 1228.1,720.8" fill="#02aebd"/>
    <polygon points="1067.1,339.8 1067.5,339.2 1067.9,338.7 1068.2,338.1 1230.4,718.2 1229.8,718.9 1229.2,719.5 1228.7,720.1" fill="#04adb1"/>
    <polygon points="1067.5,339.2 1067.9,338.7 1068.2,338.1 1068.6,337.6 1230.9,717.6 1230.4,718.2 1229.8,718.9 1229.2,719.5" fill="#04aba5"/>
    <polygon points="1067.9,338.7 1068.2,338.1 1068.6,337.6 1069.0,337.0 1231.5,717.0 1230.9,717.6 1230.4,718.2 1229.8,718.9" fill="#06aa99"/>
    <polygon points="1068.2,338.1 1068.6,337.6 1069.0,337.0 1069.4,336.1 1232.1,716.2 1231.5,717.0 1230.9,717.6 1230.4,718.2" fill="#06a88c"/>
    <polygon points="1068.6,337.6 1069.0,337.0 1069.4,336.1 1069.8,335.2 1232.6,715.5 1232.1,716.2 1231.5,717.0 1230.9,717.6" fill="#08a780"/>
    <polygon points="1069.0,337.0 1069.4,336.1 1069.8,335.2 1070.1,334.4 1233.2,714.8 1232.6,715.5 1232.1,716.2 1231.5,717.0" fill="#08a574"/>
    <polygon points="1069.4,336.1 1069.8,335.2 1070.1,334.4 1070.5,333.5 1233.8,714.0 1233.2,714.8 1232.6,715.5 1232.1,716.2" fill="#0aa368"/>
    <polygon points="1069.8,335.2 1070.1,334.4 1070.5,333.5 1070.9,332.6 1234.3,713.2 1233.8,714.0 1233.2,714.8 1232.6,715.5" fill="#0aa15b"/>
    <polygon points="1070.1,334.4 1070.5,333.5 1070.9,332.6 1071.2,331.8 1234.9,712.5 1234.3,713.2 1233.8,714.0 1233.2,714.8" fill="#0c9f4f"/>
    <polygon points="1070.5,333.5 1070.9,332.6 1071.2,331.8 1071.6,330.9 1235.4,711.8 1234.9,712.5 1234.3,713.2 1233.8,714.0" fill="#0c9d43"/>
    <polygon points="1070.9,332.6 1071.2,331.8 1071.6,330.9 1072.0,330.0 1236.0,711.0 1235.4,711.8 1234.9,712.5 1234.3,713.2" fill="#0e9b37"/>
    <polygon points="1071.2,331.8 1071.6,330.9 1072.0,330.0 1072.4,329.0 1236.5,710.4 1236.0,711.0 1235.4,711.8 1234.9,712.5" fill="#0e992a"/>
    <polygon points="1071.6,330.9 1072.0,330.0 1072.4,329.0 1072.8,328.0 1237.0,709.8 1236.5,710.4 1236.0,711.0 1235.4,711.8" fill="#10971e"/>
    <polygon points="1072.0,330.0 1072.4,329.0 1072.8,328.0 1073.1,327.0 1237.5,709.1 1237.0,709.8 1236.5,710.4 1236.0,711.0" fill="#159418"/>
    <polygon points="1072.4,329.0 1072.8,328.0 1073.1,327.0 1073.5,326.0 1238.0,708.5 1237.5,709.1 1237.0,709.8 1236.5,710.4" fill="#1e9116"/>
    <polygon points="1072.8,328.0 1073.1,327.0 1073.5,326.0 1073.9,325.0 1238.5,707.9 1238.0,708.5 1237.5,709.1 1237.0,709.8" fill="#288d16"/>
    <polygon points="1073.1,327.0 1073.5,326.0 1073.9,325.0 1074.2,324.0 1239.0,707.2 1238.5,707.9 1238.0,708.5 1237.5,709.1" fill="#318a14"/>
    <polygon points="1073.5,326.0 1073.9,325.0 1074.2,324.0 1074.6,323.0 1239.5,706.6 1239.0,707.2 1238.5,707.9 1238.0,708.5" fill="#3b8614"/>
    <polygon points="1073.9,325.0 1074.2,324.0 1074.6,323.0 1075.0,322.0 1240.0,706.0 1239.5,706.6 1239.0,707.2 1238.5,707.9" fill="#448312"/>
    <polygon points="1074.2,324.0 1074.6,323.0 1075.0,322.0 1075.3,321.0 1240.6,705.1 1240.0,706.0 1239.5,706.6 1239.0,707.2" fill="#4e7f12"/>
    <polygon points="1074.6,323.0 1075.0,322.0 1075.3,321.0 1075.6,320.0 1241.2,704.2 1240.6,705.1 1240.0,706.0 1239.5,706.6" fill="#577c10"/>
    <polygon points="1075.0,322.0 1075.3,321.0 1075.6,320.0 1075.9,319.0 1241.9,703.4 1241.2,704.2 1240.6,705.1 1240.0,706.0" fill="#5d7910"/>
    <polygon points="1075.3,321.0 1075.6,320.0 1075.9,319.0 1076.2,318.0 1242.5,702.5 1241.9,703.4 1241.2,704.2 1240.6,705.1" fill="#5f770f"/>
    <polygon points="1075.6,320.0 1075.9,319.0 1076.2,318.0 1076.6,317.0 1243.1,701.6 1242.5,702.5 1241.9,703.4 1241.2,704.2" fill="#62750f"/>
    <polygon points="1075.9,319.0 1076.2,318.0 1076.6,317.0 1076.9,316.0 1243.8,700.8 1243.1,701.6 1242.5,702.5 1241.9,703.4" fill="#64730e"/>
    <polygon points="1076.2,318.0 1076.6,317.0 1076.9,316.0 1077.2,315.0 1244.4,699.9 1243.8,700.8 1243.1,701.6 1242.5,702.5" fill="#66710e"/>
    <polygon points="1076.6,317.0 1076.9,316.0 1077.2,315.0 1077.5,314.0 1245.0,699.0 1244.4,699.9 1243.8,700.8 1243.1,701.6" fill="#686f0d"/>
    <polygon points="1076.9,316.0 1077.2,315.0 1077.5,314.0 1077.8,312.9 1245.6,698.2 1245.0,699.0 1244.4,699.9 1243.8,700.8" fill="#6b6d0d"/>
    <polygon points="1077.2,315.0 1077.5,314.0 1077.8,312.9 1078.1,311.8 1246.2,697.4 1245.6,698.2 1245.0,699.0 1244.4,699.9" fill="#6d6b0c"/>
    <polygon points="1077.5,314.0 1077.8,312.9 1078.1,311.8 1078.4,310.6 1246.9,696.6 1246.2,697.4 1245.6,698.2 1245.0,699.0" fill="#70680c"/>
    <polygon points="1077.8,312.9 1078.1,311.8 1078.4,310.6 1078.8,309.5 1247.5,695.8 1246.9,696.6 1246.2,697.4 1245.6,698.2" fill="#73630b"/>
    <polygon points="1078.1,311.8 1078.4,310.6 1078.8,309.5 1079.1,308.4 1248.1,694.9 1247.5,695.8 1246.9,696.6 1246.2,697.4" fill="#775e0b"/>
    <polygon points="1078.4,310.6 1078.8,309.5 1079.1,308.4 1079.4,307.2 1248.8,694.1 1248.1,694.9 1247.5,695.8 1246.9,696.6" fill="#7a590a"/>
    <polygon points="1078.8,309.5 1079.1,308.4 1079.4,307.2 1079.7,306.1 1249.4,693.3 1248.8,694.1 1248.1,694.9 1247.5,695.8" fill="#7e550a"/>
    <polygon points="1079.1,308.4 1079.4,307.2 1079.7,306.1 1080.0,305.0 1250.0,692.5 1249.4,693.3 1248.8,694.1 1248.1,694.9" fill="#815009"/>
    <polygon points="1079.4,307.2 1079.7,306.1 1080.0,305.0 1080.3,303.9 1250.8,691.2 1250.0,692.5 1249.4,693.3 1248.8,694.1" fill="#854b09"/>
    <polygon points="1079.7,306.1 1080.0,305.0 1080.3,303.9 1080.6,302.9 1251.5,690.0 1250.8,691.2 1250.0,692.5 1249.4,693.3" fill="#884608"/>
    <polygon points="1080.0,305.0 1080.3,303.9 1080.6,302.9 1080.9,301.8 1252.2,688.8 1251.5,690.0 1250.8,691.2 1250.0,692.5" fill="#8c4208"/>
    <polygon points="1080.3,303.9 1080.6,302.9 1080.9,301.8 1081.2,300.8 1253.0,687.5 1252.2,688.8 1251.5,690.0 1250.8,691.2" fill="#903e08"/>
    <polygon points="1080.6,302.9 1080.9,301.8 1081.2,300.8 1081.6,299.7 1253.8,686.2 1253.0,687.5 1252.2,688.8 1251.5,690.0" fill="#933a08"/>
    <polygon points="1080.9,301.8 1081.2,300.8 1081.6,299.7 1081.9,298.6 1254.5,685.0 1253.8,686.2 1253.0,687.5 1252.2,688.8" fill="#973608"/>
    <polygon points="1081.2,300.8 1081.6,299.7 1081.9,298.6 1082.2,297.6 1255.2,683.8 1254.5,685.0 1253.8,686.2 1253.0,687.5" fill="#9b3208"/>
    <polygon points="1081.6,299.7 1081.9,298.6 1082.2,297.6 1082.5,296.5 1256.0,682.5 1255.2,683.8 1254.5,685.0 1253.8,686.2" fill="#9f2e08"/>
    <polygon points="1081.9,298.6 1082.2,297.6 1082.5,296.5 1082.9,295.7 1256.5,682.0 1256.0,682.5 1255.2,683.8 1254.5,685.0" fill="#a22a08"/>
    <polygon points="1082.2,297.6 1082.5,296.5 1082.9,295.7 1083.4,294.9 1257.0,681.5 1256.5,682.0 1256.0,682.5 1255.2,683.8" fill="#a62608"/>
    <polygon points="1082.5,296.5 1082.9,295.7 1083.4,294.9 1083.8,294.1 1257.5,681.0 1257.0,681.5 1256.5,682.0 1256.0,682.5" fill="#aa250a"/>
    <polygon points="1082.9,295.7 1083.4,294.9 1083.8,294.1 1084.2,293.2 1258.0,680.5 1257.5,681.0 1257.0,681.5 1256.5,682.0" fill="#af270d"/>
    <polygon points="1083.4,294.9 1083.8,294.1 1084.2,293.2 1084.7,292.4 1258.5,680.0 1258.0,680.5 1257.5,681.0 1257.0,681.5" fill="#b32910"/>
    <polygon points="1083.8,294.1 1084.2,293.2 1084.7,292.4 1085.1,291.6 1259.0,679.5 1258.5,680.0 1258.0,680.5 1257.5,681.0" fill="#b82b13"/>
    <polygon points="1084.2,293.2 1084.7,292.4 1085.1,291.6 1085.6,290.8 1259.5,679.0 1259.0,679.5 1258.5,680.0 1258.0,680.5" fill="#bc2d17"/>
    <polygon points="1084.7,292.4 1085.1,291.6 1085.6,290.8 1086.0,290.0 1260.0,678.5 1259.5,679.0 1259.0,679.5 1258.5,680.0" fill="#c12f1a"/>
    <polygon points="1085.1,291.6 1085.6,290.8 1086.0,290.0 1086.9,289.0 1260.7,677.9 1260.0,678.5 1259.5,679.0 1259.0,679.5" fill="#c5311d"/>
    <polygon points="1085.6,290.8 1086.0,290.0 1086.9,289.0 1087.8,288.1 1261.4,677.2 1260.7,677.9 1260.0,678.5 1259.5,679.0" fill="#ca3320"/>
    <polygon points="1086.0,290.0 1086.9,289.0 1087.8,288.1 1088.6,287.1 1262.1,676.6 1261.4,677.2 1260.7,677.9 1260.0,678.5" fill="#ce3928"/>
    <polygon points="1086.9,289.0 1087.8,288.1 1088.6,287.1 1089.5,286.1 1262.8,676.0 1262.1,676.6 1261.4,677.2 1260.7,677.9" fill="#d34434"/>
    <polygon points="1087.8,288.1 1088.6,287.1 1089.5,286.1 1090.4,285.1 1263.4,675.4 1262.8,676.0 1262.1,676.6 1261.4,677.2" fill="#d84f3f"/>
    <polygon points="1088.6,287.1 1089.5,286.1 1090.4,285.1 1091.2,284.1 1264.1,674.8 1263.4,675.4 1262.8,676.0 1262.1,676.6" fill="#dd5a4b"/>
    <polygon points="1089.5,286.1 1090.4,285.1 1091.2,284.1 1092.1,283.2 1264.8,674.1 1264.1,674.8 1263.4,675.4 1262.8,676.0" fill="#e16457"/>
    <polygon points="1090.4,285.1 1091.2,284.1 1092.1,283.2 1093.0,282.2 1265.5,673.5 1264.8,674.1 1264.1,674.8 1263.4,675.4" fill="#e66f63"/>
    <polygon points="1091.2,284.1 1092.1,283.2 1093.0,282.2 1094.8,281.1 1266.7,672.9 1265.5,673.5 1264.8,674.1 1264.1,674.8" fill="#eb7a6e"/>
    <polygon points="1092.1,283.2 1093.0,282.2 1094.8,281.1 1096.6,280.1 1267.9,672.3 1266.7,672.9 1265.5,673.5 1264.8,674.1" fill="#f0857a"/>
    <polygon points="1093.0,282.2 1094.8,281.1 1096.6,280.1 1098.4,279.1 1269.1,671.7 1267.9,672.3 1266.7,672.9 1265.5,673.5" fill="#f38d84"/>
    <polygon points="1094.8,281.1 1096.6,280.1 1098.4,279.1 1100.2,278.0 1270.2,671.0 1269.1,671.7 1267.9,672.3 1266.7,672.9" fill="#f4938b"/>
    <polygon points="1096.6,280.1 1098.4,279.1 1100.2,278.0 1102.1,276.9 1271.4,670.4 1270.2,671.0 1269.1,671.7 1267.9,672.3" fill="#f69a93"/>
    <polygon points="1098.4,279.1 1100.2,278.0 1102.1,276.9 1103.9,275.9 1272.6,669.8 1271.4,670.4 1270.2,671.0 1269.1,671.7" fill="#f8a09a"/>
    <polygon points="1100.2,278.0 1102.1,276.9 1103.9,275.9 1105.7,274.9 1273.8,669.2 1272.6,669.8 1271.4,670.4 1270.2,671.0" fill="#f9a6a2"/>
    <polygon points="1102.1,276.9 1103.9,275.9 1105.7,274.9 1107.5,273.8 1275.0,668.6 1273.8,669.2 1272.6,669.8 1271.4,670.4" fill="#fbaca9"/>
    <polygon points="1103.9,275.9 1105.7,274.9 1107.5,273.8 1110.3,272.9 1278.1,667.4 1275.0,668.6 1273.8,669.2 1272.6,669.8" fill="#fdb3b1"/>
    <polygon points="1105.7,274.9 1107.5,273.8 1110.3,272.9 1113.1,271.9 1281.2,666.1 1278.1,667.4 1275.0,668.6 1273.8,669.2" fill="#feb9b8"/>
    <polygon points="1107.5,273.8 1110.3,272.9 1113.1,271.9 1115.9,271.0 1284.4,664.9 1281.2,666.1 1278.1,667.4 1275.0,668.6" fill="#ffbdbd"/>
    <polygon points="1110.3,272.9 1113.1,271.9 1115.9,271.0 1118.8,270.1 1287.5,663.7 1284.4,664.9 1281.2,666.1 1278.1,667.4" fill="#ffc0c0"/>
    <polygon points="1113.1,271.9 1115.9,271.0 1118.8,270.1 1121.6,269.2 1290.6,662.5 1287.5,663.7 1284.4,664.9 1281.2,666.1" fill="#ffc3c3"/>
    <polygon points="1115.9,271.0 1118.8,270.1 1121.6,269.2 1124.4,268.2 1293.8,661.2 1290.6,662.5 1287.5,663.7 1284.4,664.9" fill="#ffc6c6"/>
    <polygon points="1118.8,270.1 1121.6,269.2 1124.4,268.2 1127.2,267.3 1296.9,660.0 1293.8,661.2 1290.6,662.5 1287.5,663.7" fill="#ffc8c8"/>
    <polygon points="1121.6,269.2 1124.4,268.2 1127.2,267.3 1130.0,266.4 1300.0,658.8 1296.9,660.0 1293.8,661.2 1290.6,662.5" fill="#ffcbcb"/>
    <polygon points="1124.4,268.2 1127.2,267.3 1130.0,266.4 1300.0,658.8 1296.9,660.0 1293.8,661.2" fill="#ffcece"/>
    <polygon points="1127.2,267.3 1130.0,266.4 1300.0,658.8 1296.9,660.0" fill="#ffd1d1"/>
  <!-- left side sliver -->
  <polygon points="810.9,420 817.1,420.1 932.3,824.8 933.6,831.5 913,780.7 837.8,520" fill="#e9e9f2"/>
  <!-- texture on plateau -->
  <g clip-path="url(#pinkclip)">
    <g mask="url(#mfade)">
      <rect x="1080" y="220" width="420" height="460" filter="url(#specks)" transform="rotate(-18 1300 440)"/>
    </g>
    <rect x="1080" y="220" width="420" height="460" filter="url(#hilite)" opacity=".55" transform="rotate(-18 1300 440)"/>
  </g>
  <g clip-path="url(#oliveclip)"><rect x="900" y="400" width="520" height="200" filter="url(#yspk)" opacity=".5" transform="rotate(67 1160 500)"/></g>
  <!-- blemishes -->
  <ellipse cx="932.5" cy="469.5" rx="3.6" ry="2.8" fill="#06104a"/>
  <ellipse cx="932.5" cy="469.5" rx="6" ry="4.5" fill="#0a1c7a" opacity=".35"/>
  <ellipse cx="1250" cy="370.5" rx="1.6" ry="1.2" fill="#6a5050"/>
  <ellipse cx="1171" cy="266" rx="1.6" ry="1" fill="#8a6a6a"/>
  <ellipse cx="1128.500" cy="277.5" rx="1.6" ry="1" fill="#8a6a6a"/>

  <!-- black front face -->
  <path d="M1485 597.5 L1355 640 L1300 658.8 L1275 668.8 L1262.5 676 L1256 682.5 L1250 692.5 L1243 702 L1236 711 L1230 718.8 L1220 727.5 L1200 735 L1150 750 L932.3 824.5 L933.7 831.3 L1440 664.6 Z" fill="#0c0c0c"/>

  <!-- curtain + profile -->
  <path d="M856 558.3 L1381 407 L1381 409.5 L1225.6 454 C1212 458 1190 463.5 1180 470 C1164 481 1160 504 1152 522 C1145 537 1130 545.5 1100 554.5 L872.5 620 Z" fill="#16166a" opacity=".3"/>
  <path d="M874 619.6 L1100 554.5 C1130 545.5 1145 537 1152 522 C1160 504 1164 481 1180 470 C1190 463.5 1212 458 1225.6 454 L1381 409" stroke="#d8f0e8" stroke-width="1.1" fill="none" stroke-linejoin="round"/>
  <path d="M1180 465 L1381 406.5" stroke="#7a6a6a" stroke-width="1.6" opacity=".55"/>

  <!-- box top edges -->
  <g stroke="#1a1a1a" stroke-width="1" fill="none">
    <path d="M1280 217.5L1485 597.5L913 780.7" />
    <path d="M1280 217.5l-3.500 7" />
  </g>
  <!-- axes -->
  <g stroke="#111" stroke-width="1.15" fill="none">
    <path d="M791 346L837.8 520L913 780.7L933.8 832.6L1441 665.500"/>
    <path d="M933.7 833.0l8.7 27.8M962.1 823.6l4.4 13.8M990.4 814.3l4.5 13.8M1018.4 805.1l4.6 13.7M1046.2 795.9l4.6 13.7M1073.8 786.9l9.4 27.2M1101.2 777.8l4.8 13.5M1128.4 768.9l4.8 13.5M1155.4 760.0l4.9 13.4M1182.2 751.1l5.0 13.4M1208.8 742.4l10.1 26.6M1235.2 733.7l5.1 13.2M1261.4 725.1l5.2 13.2M1287.4 716.5l5.3 13.1M1313.1 708.0l5.3 13.1M1338.7 699.6l10.8 26.0M1364.1 691.2l5.5 12.9M1389.2 682.9l5.6 12.9M1414.2 674.7l5.6 12.8M930.0 807.6l-11.5 2.9M919.0 780.6l-11.5 2.9M911.1 753.8l-11.5 2.9M903.8 728.2l-11.5 2.9M897.6 705.0l-25.0 6.3M889.0 677.1l-11.5 2.9M882.3 653.9l-11.5 2.9M875.3 629.6l-11.5 2.9M868.4 605.6l-11.5 2.9M862.4 583.0l-25.0 6.3M855.4 560.6l-11.5 2.9M849.4 539.6l-11.5 2.9M843.2 518.3l-11.5 2.9M837.2 496.0l-11.5 2.9M832.5 476.5l-25.0 6.3M826.1 454.6l-11.5 2.9"/>
    <path d="M932.5 833L905 842.500M1441 665.5L1464 658.800"/>
    <path d="M793 375.500h11.500M801 405.500h11.500M811 433h9.500"/>
  </g>
  <g font-family="DejaVu Sans Light, DejaVu Sans, Liberation Sans, sans-serif" font-weight="200" fill="#141414">
    <text transform="translate(947 884) rotate(-12)" font-size="31" text-anchor="middle" dominant-baseline="central">0</text>
    <text transform="translate(882.5 848.5) rotate(71)" font-size="35" text-anchor="middle" dominant-baseline="central">0</text>
    <text transform="translate(1482.5 653.5) rotate(73)" font-size="32" text-anchor="middle" dominant-baseline="central">0</text>
    <text transform="translate(1058.8 857.5) rotate(-18)" font-size="32" letter-spacing="3.2">500</text>
    <text transform="translate(1187.5 812.5) rotate(-17.5)" font-size="31" letter-spacing="3">1000</text>
    <text transform="translate(1322.5 766) rotate(-16.500)" font-size="29.5" letter-spacing="2.600">1500</text>
    <text transform="translate(1063.8 897.5) rotate(-17.4)" font-size="32.500" textLength="334" lengthAdjust="spacing">X-Distance (µm)</text>
    <text transform="translate(791.3 489.5) rotate(71)" font-size="26.5" letter-spacing=".8" text-anchor="middle" dominant-baseline="central">1500</text>
    <text transform="translate(817.7 597.7) rotate(70.5)" font-size="29" letter-spacing="1.6" text-anchor="middle" dominant-baseline="central">1000</text>
    <text transform="translate(849.4 716.5) rotate(69)" font-size="31" letter-spacing="2.5" text-anchor="middle" dominant-baseline="central">500</text>
    <text transform="translate(794 652) rotate(76)" font-size="29.5" textLength="296" lengthAdjust="spacing" text-anchor="middle" dominant-baseline="central">Y-Distance (µm)</text>
    <text transform="translate(1490 577.5) rotate(-117.5)" font-size="26" textLength="277" lengthAdjust="spacing">Y-Distance (µm)</text>
  </g>
  <g font-family="Liberation Sans, sans-serif" fill="#111">
    <text x="780.9" y="384.6" font-size="18" text-anchor="middle">1</text>
    <text x="783.4" y="413.7" font-size="18" text-anchor="middle">0.5</text>
    <text x="801.2" y="440.4" font-size="18" text-anchor="middle">0</text>
    <text transform="translate(747.4 397.2) rotate(-108)" font-size="18.3" letter-spacing="1.3" text-anchor="middle" dominant-baseline="central" fill="#111">Height (µm)</text>
  </g>
  <circle cx="850" cy="559.5" r="10.2" fill="url(#sphG)"/>
  <circle cx="1381" cy="402.5" r="9.3" fill="url(#sphR)"/>
  <!-- orientation marker -->
  <g>
    <path d="M651.5 152.500L668 147.500" stroke="#e82010" stroke-width="3.400"/>
    <path d="M665.500 143.200L674.500 145.400L668 152.200Z" fill="#8a1408"/>
    <path d="M643.500 137.500L650.500 135.500L656.800 142.500L655 150L651.500 154.500L647.500 152Z" fill="#1428d8"/>
    <path d="M641.800 138.800L644.800 134.500L648.500 137.500L645.500 142Z" fill="#0a3a12"/>
    <text x="637.500" y="129.500" font-family="Liberation Sans, sans-serif" font-size="7.500" fill="#333">Y</text>
    <text x="648.300" y="135" font-family="Liberation Sans, sans-serif" font-size="7.500" font-weight="bold" fill="#2a36e0">Z</text>
    <text x="680" y="146.500" font-family="Liberation Sans, sans-serif" font-size="7.500" font-weight="bold" fill="#f02a1c">X</text>
  </g>
</svg><!--V3E-->

<!-- ===== step height ===== -->
<div class="abs" style="left:622px;top:920px;width:251px;height:29px;background:#90dd90"></div>
<div class="t" id="lblStep" style="left:627.5px;top:929px;font-size:13.6px;font-weight:normal;-webkit-text-stroke:.45px #143214;letter-spacing:.16px;color:#143214">Step-Height Result (z₂-z₁):</div>
<div class="t" id="lblVal" style="left:786px;top:954px;font-size:19px;font-weight:bold;letter-spacing:.75px;color:#111">1.189 µm</div>

<svg class="abs" style="left:1420px;top:865px" width="200" height="100" viewBox="1420 865 200 100">
  <text id="klaText" transform="scale(1.300 1)" x="1093.31 1132.69 1164.62" y="915.4" font-family="DejaVu Sans Light, DejaVu Sans, Liberation Sans, sans-serif" font-weight="200" font-size="53.5" fill="#3d1a78" stroke="#3d1a78" stroke-width="0.60">KLA</text>
  <rect x="1568.500" y="876" width="39.300" height="39.700" fill="#a722d9"/>
  <rect x="1571.300" y="893.700" width="33.700" height="4.300" fill="#fff"/>
  <rect x="1586" y="879.400" width="4.200" height="33.600" fill="#fff"/>
  <text id="instText" x="1431" y="949.800" font-family="Liberation Sans, sans-serif" font-size="24.400" fill="#41207e" textLength="177.500" lengthAdjust="spacingAndGlyphs">INSTRUMENTS</text>
</svg>
<svg class="abs" style="left:1319px;top:0" width="321" height="180" viewBox="1319 0 321 180">
  <defs>
    <filter id="wb" x="-5%" y="-5%" width="110%" height="110%"><feGaussianBlur stdDeviation=".9"/></filter>
    <filter id="wb2" x="-10%" y="-10%" width="120%" height="120%"><feGaussianBlur stdDeviation="1.800"/></filter>
    <linearGradient id="wall" x1="0" y1="0" x2="0" y2="1">
      <stop offset="0" stop-color="#dcdcdc"/><stop offset=".25" stop-color="#d2d2d4"/><stop offset=".7" stop-color="#d4d4d6"/><stop offset=".8" stop-color="#e2e2e2"/><stop offset="1" stop-color="#ececec"/>
    </linearGradient>
    <linearGradient id="purp" x1="0" y1="0" x2="1" y2="0">
      <stop offset="0" stop-color="#2f293e"/><stop offset=".25" stop-color="#3a3050"/><stop offset="1" stop-color="#3c3154"/>
    </linearGradient>
    <pattern id="chk" width="3" height="3" patternUnits="userSpaceOnUse"><rect width="3" height="3" fill="#a4a4d2"/><rect width="1.400" height="3" fill="#7f7fb6"/><rect width="3" height="1.200" fill="#8c8cc0" opacity=".7"/></pattern>
    <clipPath id="wc"><rect x="1319" y="0" width="321" height="180"/></clipPath>
  </defs>
  <g clip-path="url(#wc)">
    <rect x="1319" y="0" width="321" height="180" fill="url(#wall)"/>
    <!-- office -->
    <g filter="url(#wb)">
      <rect x="1453" y="0" width="71" height="40" fill="#d9d9da"/>
      <rect x="1555" y="-2" width="31" height="7.500" fill="#fff"/>
      <rect x="1533" y="29" width="23" height="6.600" fill="#fff"/>
      <rect x="1531" y="26.500" width="27" height="2.500" fill="#bdbdbd"/>
      <rect x="1456" y="29" width="9" height="6.600" fill="#fff"/>
      <rect x="1455" y="25" width="11" height="3" fill="#c2c2c2"/>
      <rect x="1535" y="80" width="31" height="37" fill="#ececee"/>
      <rect x="1628" y="30" width="14" height="112" fill="#f2f7fa"/>
      <rect x="1621" y="26" width="7" height="118" fill="#e3e3e5"/>
      <rect x="1627.300" y="30" width="1.700" height="112" fill="#6a6a6e"/>
      <rect x="1628" y="58" width="12" height="1.200" fill="#8a8a8e"/>
      <rect x="1628" y="79" width="12" height="1.200" fill="#8a8a8e"/>
      <rect x="1596" y="42" width="12" height="70" fill="#eaeef0"/>
      <rect x="1600" y="45.500" width="1.500" height="64" fill="#5a5a5e"/>
      <rect x="1601" y="60" width="6" height="1" fill="#8a8a8e"/>
      <rect x="1601" y="85" width="6" height="1" fill="#8a8a8e"/>
      <rect x="1523.800" y="0" width="1.200" height="170" fill="#a4a4a8"/>
      <rect x="1594.500" y="0" width="1.200" height="170" fill="#a8a8ac"/>
      <rect x="1453" y="140" width="190" height="30" fill="#e3e3e3"/>
      <rect x="1540" y="169" width="100" height="1.500" fill="#b8b8b8"/>
      <rect x="1540" y="170.500" width="100" height="10" fill="#efefef"/>
      <!-- furniture -->
      <rect x="1520" y="98.500" width="20" height="40" fill="#3c3c41"/>
      <rect x="1512" y="110" width="12" height="26" fill="#47474c"/>
      <rect x="1579" y="98" width="26" height="14.500" fill="#2b2b30"/>
      <rect x="1573" y="99" width="7" height="13" fill="#55555a"/>
      <rect x="1565" y="114" width="42" height="2" fill="#7a7a7e"/>
      <rect x="1564" y="109.500" width="20" height="18" rx="3" fill="#3a3a3f"/>
      <rect x="1572" y="127" width="2" height="12" fill="#6a6a6e"/>
      <rect x="1566" y="138" width="16" height="1.500" fill="#77777b"/>
      <rect x="1602.500" y="110.500" width="24" height="29" rx="3" fill="#3b3b40"/>
      <rect x="1612" y="139" width="2" height="13" fill="#68686c"/>
      <rect x="1603" y="151" width="24" height="1.600" fill="#77777b"/>
      <rect x="1543" y="119" width="20" height="8" fill="#b9b9bd"/>
      <rect x="1592" y="116" width="1.500" height="38" fill="#8a8a8e"/>
    </g>
    <!-- purple wall + poster -->
    <rect x="1319" y="0" width="134.700" height="180" fill="url(#purp)"/>
    <rect x="1335.800" y="27.700" width="85.200" height="116.200" fill="#ebe9f1"/>
    <text x="1337.6" y="49.7" font-family="DejaVu Sans Light, DejaVu Sans, Liberation Sans, sans-serif" font-weight="200" font-size="20.6" fill="#2a2560" stroke="#2a2560" stroke-width=".45" textLength="58.4" lengthAdjust="spacingAndGlyphs">KLA</text>
    <rect x="1398.800" y="33.800" width="16.400" height="16" fill="#a322d6"/>
    <rect x="1400.500" y="41" width="13" height="1.700" fill="#f4e8fa"/>
    <rect x="1406.200" y="35.500" width="1.700" height="12.600" fill="#f4e8fa"/>
    <text x="1340.300" y="63.500" font-family="Liberation Sans, sans-serif" font-size="9" fill="#9552c6" textLength="75.500" lengthAdjust="spacingAndGlyphs">INSTRUMENTS</text>
    <g stroke="#3a3670" stroke-width=".8" fill="none" opacity=".85">
      <path d="M1360.500 76L1354.800 86.500H1366.300ZM1360.500 76V82.500L1354.800 86.500M1360.500 82.500L1366.300 86.500"/>
      <path d="M1386 83.500H1407.500M1386 86.500H1407.500" stroke="#7a76a8"/>
      <path d="M1389 77L1396.500 83.500L1405 76.500" stroke="#9a96c0"/>
      <path d="M1340.500 111.400H1358.500M1342 100H1357V111M1345 103V111M1349 105.500V111M1353 103V111"/>
      <path d="M1376 98.500V106M1373.500 104.500Q1378.500 102.500 1383.500 104.500M1373.500 108Q1378.500 110.500 1383.500 108M1374 111Q1378.500 112.500 1383 111" stroke="#8a86b4"/>
      <path d="M1398 110.500Q1401 96 1403.500 106.500Q1407 110 1409 106.500Q1411.500 103 1414.300 110.500Z" stroke="#6a6698"/>
      <path d="M1351 135.500H1371.500M1385.600 135.500H1406.500"/>
      <path d="M1390.500 126.500L1396 135L1401.500 126.500M1396 128.500V135"/>
    </g>
    <path d="M1355.500 126L1366.500 126L1361 134.500Z" fill="#1c1a6e"/>
    <!-- person (generic silhouette) -->
    <g filter="url(#wb)">
      <path d="M1319 180L1319 172L1410 172L1418 158L1436 138L1454.500 128.500L1470 131.500L1492 150L1516.500 134.500L1542 151L1552.500 180Z" fill="url(#chk)"/>
      <path d="M1473 128L1476 150L1490 166L1505 152L1514 130Z" fill="#dcae9e"/>
      <path d="M1467.500 131L1474 128L1489 160L1482 170L1472 150Z" fill="#b0b0d4"/>
      <path d="M1517 134L1512 130L1494 160L1500 170L1512 150Z" fill="#a6a6cc"/>
      <path d="M1461.500 80Q1457 48 1478 38.500Q1497 31 1516 39.500Q1535 50 1530.500 82L1527 100L1462 96Z" fill="#6b4a3b"/>
      <path d="M1465 84Q1464 62 1472 58Q1494 50 1516 60Q1522 70 1521.500 88Q1522 112 1512 126Q1502 139.500 1491 140.500Q1480 140 1472 128Q1464 112 1465 84Z" fill="#e9bcab"/>
      <path d="M1468 86Q1468 68 1475 63Q1482 60 1487 61Q1484 90 1485 122Q1482 133 1478 129Q1468 114 1468 86Z" fill="#f3d2c5" opacity=".8" filter="url(#wb2)"/>
      <path d="M1470 46Q1494 33 1518 44Q1500 42 1484 50Z" fill="#8a6650" opacity=".7"/>
      <path d="M1459.500 64Q1456 84 1464 101" stroke="#2a2522" stroke-width="3.200" fill="none"/>
      <path d="M1459.500 70Q1458 84 1462 95" stroke="#c8c8cc" stroke-width="1.300" fill="none"/>
      <path d="M1529 68Q1533 86 1521 107" stroke="#2a2522" stroke-width="3.400" fill="none"/>
      <path d="M1528.500 80Q1528 94 1521 104" stroke="#c8c8cc" stroke-width="1.300" fill="none"/>
      <ellipse cx="1475" cy="85.500" rx="4.500" ry="2" fill="#5a4038" opacity=".75"/>
      <ellipse cx="1503" cy="87" rx="4.500" ry="2" fill="#5a4038" opacity=".75"/>
      <path d="M1469 79.500Q1476 77 1482 80M1497 81Q1504 78.500 1511 82" stroke="#7a5a4a" stroke-width="1.400" fill="none" opacity=".7"/>
      <ellipse cx="1487.500" cy="117.500" rx="7.500" ry="1.800" fill="#b86a66" opacity=".8"/>
      <path d="M1484 100Q1487 106 1492 104" stroke="#d09a8a" stroke-width="1.500" fill="none"/>
      <circle cx="1488" cy="169" r="1.800" fill="#1c1c20"/>
    </g>
    <!-- name plate -->
    <rect x="1319" y="147.500" width="128" height="24.500" fill="#0c0a10" opacity=".72"/>
    <rect x="1319" y="172" width="92" height="8" fill="#4a4650"/>
    <text id="nameText" x="1323" y="168.900" font-family="Liberation Sans, sans-serif" font-weight="bold" font-size="15.400" fill="#fff" textLength="117.500" lengthAdjust="spacingAndGlyphs">Bouman, Menno</text>
  </g>
</svg>
</body>
</html>
